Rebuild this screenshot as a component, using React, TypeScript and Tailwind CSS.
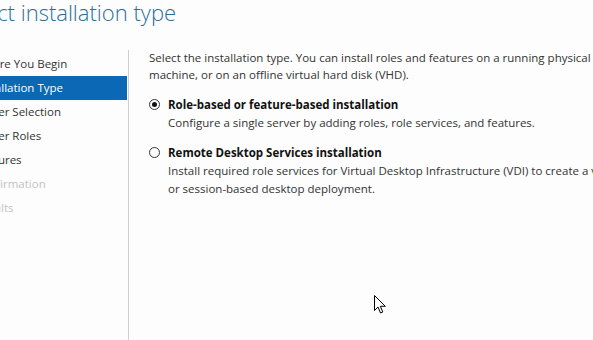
import React from "react";

const font = { fontFamily: '"Open Sans", "Noto Sans", sans-serif' };

const items: { label: string; state: "done" | "active" | "todo" | "disabled" }[] = [
  { label: "Before You Begin", state: "done" },
  { label: "Installation Type", state: "active" },
  { label: "Server Selection", state: "todo" },
  { label: "Server Roles", state: "todo" },
  { label: "Features", state: "todo" },
  { label: "Confirmation", state: "disabled" },
  { label: "Results", state: "disabled" },
];

function Radio({ checked }: { checked: boolean }) {
  return (
    <span className="relative flex h-[11px] w-[11px] shrink-0 items-center justify-center rounded-full border border-[#333] bg-white">
      {checked && <span className="h-[5px] w-[5px] rounded-full bg-[#111]" />}
    </span>
  );
}

export default function App() {
  return (
    <div className="relative h-[340px] w-[593px] overflow-hidden bg-[#fdfdfd] text-[11.5px] text-[#333]" style={font}>
      <div className="h-[50px] overflow-hidden">
        <div className="ml-[-44px] mt-[-4px] whitespace-nowrap text-[22px] font-light text-[#2b6e98]">
          Select installation type
        </div>
      </div>
      <div className="flex h-[290px]">
        <div className="w-[128px] shrink-0 overflow-hidden pt-[2px]">
          {items.map((it) => (
            <div
              key={it.label}
              className={
                "flex h-[24px] items-center whitespace-nowrap " +
                (it.state === "active"
                  ? "w-[127px] bg-[#0a68b4] text-white"
                  : it.state === "disabled"
                  ? "text-[#c2c2c2]"
                  : "text-[#333]")
              }
            >
              <span className="ml-[-25px]">{it.label}</span>
            </div>
          ))}
        </div>
        <div className="w-px shrink-0 bg-[#cfcfcf]" />
        <div className="mt-[-1px] flex min-w-0 flex-1 flex-col pl-[20px]">
          <div className="whitespace-nowrap leading-[17px]">
            <div>Select the installation type. You can install roles and features on a running physical computer or virtual</div>
            <div>machine, or on an offline virtual hard disk (VHD).</div>
          </div>
          <div className="mt-[13px] flex items-center gap-[8px] whitespace-nowrap">
            <Radio checked />
            <span className="font-bold text-[#111]">Role-based or feature-based installation</span>
          </div>
          <div className="ml-[19px] mt-[1px] whitespace-nowrap leading-[18px]">
            Configure a single server by adding roles, role services, and features.
          </div>
          <div className="mt-[12px] flex items-center gap-[8px] whitespace-nowrap">
            <Radio checked={false} />
            <span className="font-bold text-[#111]">Remote Desktop Services installation</span>
          </div>
          <div className="ml-[19px] whitespace-nowrap leading-[18px]">
            <div>Install required role services for Virtual Desktop Infrastructure (VDI) to create a virtual machine-based</div>
            <div>or session-based desktop deployment.</div>
          </div>
        </div>
      </div>
      <svg className="absolute left-[374px] top-[295px]" width="13" height="20" viewBox="0 0 13 20">
        <path d="M0.5 0.5 L0.5 15.5 L4 12 L6.5 18 L8.8 17 L6.3 11.3 L11.3 11.3 Z" fill="#fff" stroke="#000" strokeWidth="1" strokeLinejoin="miter" />
      </svg>
    </div>
  );
}
